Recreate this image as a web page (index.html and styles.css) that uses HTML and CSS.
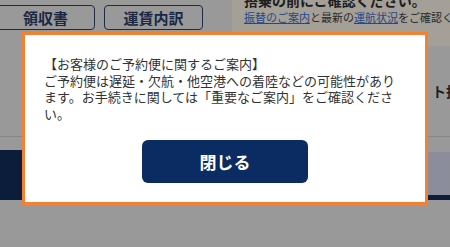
FILE: index.html
```html
<!DOCTYPE html>
<html lang="ja">
<head>
<meta charset="utf-8">
<link rel="stylesheet" href="styles.css">
</head>
<body>
<div class="page">
  <header class="top">
    <div class="actions">
      <button class="ghost-btn first">領収書</button>
      <button class="ghost-btn">運賃内訳</button>
    </div>
    <div class="notice">
      <p class="notice-title">搭乗の前にご確認ください。</p>
      <p class="notice-text"><a class="link">振替のご案内</a>と最新の<a class="link">運航状況</a>をご確認ください。</p>
    </div>
  </header>
  <section class="info-row">
    <span class="info-label">ト搭乗</span>
  </section>
  <nav class="tabs">
    <div class="tab active"></div>
    <div class="tab idle"><span class="tab-label">一</span></div>
  </nav>
</div>

<div class="overlay">
  <div class="modal">
    <p class="modal-text">【お客様のご予約便に関するご案内】<br>ご予約便は遅延・欠航・他空港への着陸などの可能性があります。お手続きに関しては「重要なご案内」をご確認ください。</p>
    <button class="close-btn">閉じる</button>
  </div>
</div>
</body>
</html>
```

FILE: styles.css
```css
* { box-sizing: border-box; }
html, body {
  margin: 0;
  padding: 0;
  width: 450px;
  height: 247px;
  overflow: hidden;
  background: #999999;
  font-family: "Noto Sans CJK JP", "Noto Sans", sans-serif;
}
p { margin: 0; }

.page { width: 450px; }

.top {
  display: flex;
  height: 46px;
}
.actions {
  display: flex;
  gap: 9px;
  margin-left: -4px;
  padding-top: 5px;
}
.ghost-btn {
  width: 99px;
  height: 25px;
  border: 1px solid #1f2b45;
  border-radius: 4px;
  background: transparent;
  color: #1b2743;
  font-family: inherit;
  font-weight: 700;
  font-size: 15px;
  line-height: 1;
  padding: 0;
}
.notice {
  margin-left: auto;
  width: 218px;
  background: #a4a097;
  padding-left: 12px;
  overflow: hidden;
  white-space: nowrap;
}
.notice-title {
  margin-top: -7px;
  font-size: 14px;
  line-height: 14px;
  font-weight: 700;
  color: #1e1e1e;
}
.notice-text {
  margin-top: 3px;
  font-size: 11px;
  line-height: 14px;
  color: #2a2a2a;
}
.link {
  color: #27478a;
  text-decoration: underline;
}

.info-row {
  height: 91px;
  border-bottom: 1px solid #878787;
  padding-left: 432px;
  padding-top: 32px;
  white-space: nowrap;
  overflow: hidden;
}
.info-label {
  font-size: 14px;
  line-height: 18px;
  font-weight: 700;
  color: #1f1f1f;
}

.tabs {
  display: flex;
  align-items: flex-end;
  height: 50px;
  margin-top: 13px;
}
.tab { flex: 1; }
.tab.active {
  height: 50px;
  background: #0b1d3b;
}
.tab.idle {
  height: 48px;
  background: #8b8d9a;
  border-bottom: 5px solid #0b1d3b;
  display: flex;
  align-items: center;
  padding-left: 220px;
  overflow: hidden;
  white-space: nowrap;
}
.tab-label {
  font-size: 13px;
  color: #333a4a;
}

.overlay {
  position: fixed;
  inset: 0;
  display: flex;
  justify-content: center;
  align-items: flex-start;
  padding-top: 32px;
}
.modal {
  width: 406px;
  background: #ffffff;
  border: 3px solid #f28133;
  border-bottom-width: 4px;
  padding: 21px 19px 19px;
  display: flex;
  flex-direction: column;
  align-items: center;
}
.modal-text {
  align-self: stretch;
  font-size: 13px;
  line-height: 16.5px;
  color: #333333;
}
.close-btn {
  margin-top: 18px;
  width: 166px;
  height: 43px;
  border: none;
  border-radius: 6px;
  background: #0b2c62;
  color: #ffffff;
  font-family: inherit;
  font-weight: 700;
  font-size: 17px;
  line-height: 1;
  padding: 0;
}
```
